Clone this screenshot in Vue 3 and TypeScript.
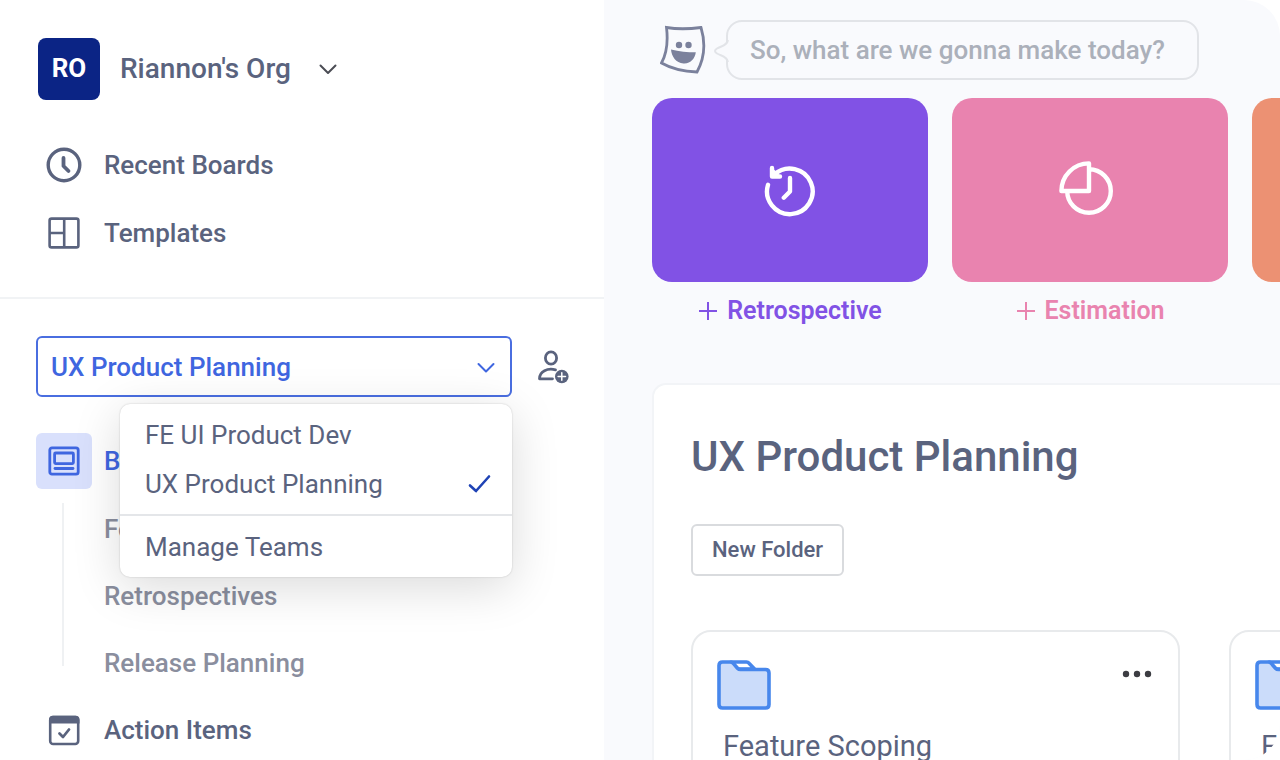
<script setup lang="ts">
import { ref } from 'vue'

const teams: string[] = ['FE UI Product Dev', 'UX Product Planning']
const team = ref('UX Product Planning')
const menuOpen = ref(true)
const boardFolders: string[] = ['Feature Scoping', 'Retrospectives', 'Release Planning']

function choose(name: string) {
  team.value = name
  menuOpen.value = false
}
</script>

<template>
  <div class="shell">
    <aside class="sidebar">
      <header class="account">
        <button class="org" type="button">
          <span class="badge">RO</span>
          <span class="org-name">Riannon's Org</span>
          <svg class="chevron" width="18" height="12" viewBox="0 0 18 12"><path d="M1.5 2.500 9 10 16.500 2.500" /></svg>
        </button>
        <nav class="nav">
          <a class="row" href="#">
            <span class="icon">
              <svg width="36" height="36" viewBox="0 0 36 36" fill="none" stroke="#5a637e" stroke-linecap="round" stroke-linejoin="round">
                <circle cx="18" cy="18" r="15.800" stroke-width="3.400" />
                <path d="M17.500 11v8l5 5" stroke-width="3.800" />
              </svg>
            </span>
            Recent Boards
          </a>
          <a class="row" href="#">
            <span class="icon">
              <svg width="32" height="32" viewBox="0 0 32 32" fill="none" stroke="#5a637e" stroke-width="2.600">
                <rect x="1.600" y="1.600" width="28.800" height="28.800" rx="2" />
                <path d="M16.200 1.600v28.800M1.600 16h14.600" />
              </svg>
            </span>
            Templates
          </a>
        </nav>
      </header>

      <section class="workspace">
        <div class="team-bar">
          <div class="team-picker">
            <select v-model="team" class="team-select" aria-label="Team" @mousedown.prevent="menuOpen = !menuOpen">
              <option v-for="name in teams" :key="name">{{ name }}</option>
            </select>
            <svg class="select-arrow" width="18" height="12" viewBox="0 0 18 12"><path d="M1.500 2 9 9.500 16.500 2" /></svg>
            <div v-if="menuOpen" class="menu" role="menu">
              <div class="menu-group">
                <button v-for="name in teams" :key="name" class="menu-item" type="button" role="menuitemradio" :aria-checked="name === team" @click="choose(name)">
                  {{ name }}
                  <svg v-if="name === team" width="24" height="20" viewBox="0 0 24 20" fill="none" stroke="#1f43b5" stroke-width="2.600" stroke-linecap="round" stroke-linejoin="round"><path d="M2 11.500 8 17 21 2.500" /></svg>
                </button>
              </div>
              <div class="menu-group last">
                <button class="menu-item" type="button" role="menuitem">Manage Teams</button>
              </div>
            </div>
          </div>
          <button class="invite" type="button" aria-label="Invite">
            <svg width="32" height="34" viewBox="0 0 32 34" fill="none" stroke="#5a637e" stroke-width="2.800" stroke-linecap="round" stroke-linejoin="round">
              <ellipse cx="13" cy="8" rx="5.600" ry="6.200" />
              <path d="M17.500 19.800c-8-2-16 1.400-16 9h13" />
              <circle cx="23.800" cy="26.500" r="6.800" fill="#5a637e" stroke="none" />
              <path d="M23.800 22.800v7.400M20.100 26.500h7.400" stroke="#fff" stroke-width="1.500" />
            </svg>
          </button>
        </div>

        <nav class="nav">
          <a class="row active" href="#">
            <span class="icon">
              <svg width="32" height="32" viewBox="0 0 32 32" fill="none" stroke="#3f66e0" stroke-width="2.800" stroke-linecap="round">
                <rect x="1.800" y="2.800" width="28.400" height="26.400" rx="2.200" />
                <rect x="6.600" y="8" width="18.800" height="10.600" rx="1" />
                <path d="M7 23.500h18" />
              </svg>
            </span>
            Boards
          </a>
          <div class="sub-list">
            <a v-for="name in boardFolders" :key="name" class="sub" href="#">{{ name }}</a>
          </div>
          <a class="row" href="#">
            <span class="icon">
              <svg width="32" height="32" viewBox="0 0 32 32" fill="none" stroke="#5a637e">
                <rect x="2.200" y="3" width="28" height="27" rx="3" stroke-width="2.600" />
                <path d="M1 9.500V5.500A3.800 3.800 0 0 1 4.800 1.700h22.900A3.800 3.800 0 0 1 31.500 5.500V9.500z" fill="#5a637e" stroke="none" />
                <path d="m11.500 19.500 3.500 3.500 6-7.500" stroke-width="2.800" stroke-linecap="round" stroke-linejoin="round" />
              </svg>
            </span>
            Action Items
          </a>
        </nav>
      </section>
    </aside>

    <main class="main">
      <div class="prompt">
        <svg class="mascot" width="46" height="50" viewBox="0 0 46 50" fill="none" stroke="#7b819c" stroke-width="2.800">
          <path d="M6.500 2.500c11 1.800 23 1.500 34.500 0 4.500 15 4 30-4 44.500-13-.5-25-3-35.500-9C7.500 27 8 15 6.500 2.500z" />
          <g fill="#7b819c" stroke="none">
            <circle cx="19" cy="20" r="3.200" />
            <circle cx="28.500" cy="20" r="3.200" />
            <path d="M11 24.500c8 2 16.500 2.800 24.800 2.800C35 33.500 30.500 39 23.500 38.500 16 38 11.500 31.500 11 24.500z" />
          </g>
        </svg>
        <div class="bubble">
          <svg class="tail" width="16" height="24" viewBox="0 0 16 24"><path d="M15 1C14 7 8 7 4 9.500Q0 12 4 14.500C8 17 14 17 15 23" fill="#f9fafd" stroke="#e2e4e8" stroke-width="2" /></svg>
          <p>So, what are we gonna make today?</p>
        </div>
      </div>

      <div class="makers">
        <button class="maker purple" type="button">
          <span class="tile">
            <svg width="54" height="54" viewBox="0 0 54 54" fill="none" stroke="#fff" stroke-width="4.400" stroke-linecap="round" stroke-linejoin="round">
              <path d="M5 21.800A22.800 22.800 0 1 0 11.500 11.500M9 5v8.500h8M27 15v13.500l-6.200 6.200" />
              <path d="M9 5v8.500h8L14 9z" fill="#fff" stroke="none" />
            </svg>
          </span>
          <span class="caption">
            <svg width="20" height="20" viewBox="0 0 20 20"><path d="M10 1v18M1 10h18" /></svg>
            Retrospective
          </span>
        </button>
        <button class="maker pink" type="button">
          <span class="tile">
            <svg width="64" height="64" viewBox="0 0 64 64" fill="none" stroke="#fff" stroke-width="4.400" stroke-linejoin="round">
              <path d="M31 11.200A21.800 21.800 0 1 1 9.200 33M31 5.400V33H3.400A27.600 27.600 0 0 1 31 5.400z" />
            </svg>
          </span>
          <span class="caption">
            <svg width="20" height="20" viewBox="0 0 20 20"><path d="M10 1v18M1 10h18" /></svg>
            Estimation
          </span>
        </button>
        <div class="maker orange"><span class="tile"></span></div>
      </div>

      <section class="panel">
        <h1>UX Product Planning</h1>
        <button class="new-folder" type="button">New Folder</button>
        <div class="folders">
          <article v-for="name in ['Feature Scoping', 'F']" :key="name" class="folder">
            <div class="folder-top">
              <svg width="54" height="50" viewBox="0 0 54 50" fill="#cbdcfa" stroke="#4787ec" stroke-width="3.600" stroke-linejoin="round">
                <path d="M14 2h15.500q1.500 0 2.500 1.200L37.500 9H21z" fill="#fff" />
                <path d="M5.500 2H13q2 0 3.300 1.400l4.200 4.800q1.200 1.300 3 1.300H48.500q3.500 0 3.500 3.500v31.500q0 3.500-3.500 3.500h-43Q2 48 2 44.500v-39Q2 2 5.500 2z" />
              </svg>
              <button class="more" type="button" aria-label="More">
                <svg width="30" height="8" viewBox="0 0 30 8" fill="#3c3d42"><circle cx="4" cy="4" r="3.200" /><circle cx="15" cy="4" r="3.200" /><circle cx="26" cy="4" r="3.200" /></svg>
              </button>
            </div>
            <h2>{{ name }}</h2>
          </article>
        </div>
      </section>
    </main>
  </div>
</template>

<style>
body {
  margin: 0;
  background: #fff;
}
</style>

<style scoped>
* {
  box-sizing: border-box;
}

.shell {
  display: flex;
  height: 100vh;
  overflow: hidden;
  font-family: Roboto, 'Liberation Sans', sans-serif;
  font-size: 26px;
  font-weight: 500;
  line-height: 32px;
  color: #5a637e;
  background: #fff;
}

button,
select {
  font: inherit;
  color: inherit;
  background: none;
  border: 0;
  padding: 0;
  cursor: pointer;
}

a {
  color: inherit;
  text-decoration: none;
}

svg {
  display: block;
  flex: none;
}

h1,
h2,
p {
  margin: 0;
}

.sidebar {
  flex: none;
  width: 604px;
}

.account {
  padding: 38px 36px 30px;
  border-bottom: 2px solid #f1f3f5;
}

.org {
  display: flex;
  align-items: center;
  margin: 0 0 31px 2px;
}

.badge {
  display: grid;
  place-items: center;
  width: 62px;
  height: 62px;
  padding-bottom: 2px;
  border-radius: 8px;
  background: #0b2485;
  color: #fff;
  font-weight: 700;
}

.org-name {
  margin: 0 28px 0 20px;
  font-size: 28px;
}

.chevron,
.select-arrow {
  fill: none;
  stroke: #4b4d55;
  stroke-width: 2;
  stroke-linecap: round;
  stroke-linejoin: round;
}

.row {
  display: flex;
  align-items: center;
  gap: 12px;
  height: 68px;
}

.icon {
  display: grid;
  place-items: center;
  width: 56px;
  height: 56px;
  border-radius: 6px;
}

.active {
  color: #3f66e0;
}

.active .icon {
  background: #d9e0fc;
}

.workspace {
  padding: 37px 32px 0 36px;
}

.team-bar {
  display: flex;
  align-items: center;
  gap: 26px;
  margin-bottom: 30px;
}

.team-picker {
  position: relative;
  flex: 1;
}

.team-select {
  display: block;
  appearance: none;
  width: 100%;
  height: 61px;
  padding: 0 48px 0 13px;
  border: 2px solid #4a6ee0;
  border-radius: 6px;
  background: #fff;
  color: #3f66e0;
}

.select-arrow {
  position: absolute;
  top: 26px;
  right: 17px;
  stroke: #3f66e0;
  pointer-events: none;
}

.menu {
  position: absolute;
  z-index: 2;
  top: 68px;
  left: 84px;
  right: 0;
  border-radius: 10px;
  background: #fff;
  box-shadow: 0 0 2px rgba(0, 0, 0, 0.2), 0 10px 48px rgba(0, 0, 0, 0.15);
}

.menu-group {
  padding: 6px 0;
}

.menu-group.last {
  border-top: 2px solid #e4e6e9;
}

.menu-item {
  display: flex;
  align-items: center;
  justify-content: space-between;
  width: 100%;
  height: 49px;
  padding: 0 20px 0 25px;
  font-weight: 400;
}

.invite {
  margin-right: 2px;
}

.sub-list {
  margin-left: 26px;
  padding-left: 42px;
  background: linear-gradient(#eff1f3, #eff1f3) 0 8px / 2px calc(100% - 38px) no-repeat;
}

.sub {
  display: flex;
  align-items: center;
  height: 67px;
  color: #8a8e9e;
}

.main {
  flex: 1;
  min-width: 0;
  overflow: hidden;
  padding: 20px 0 0 48px;
  border-radius: 0 36px 36px 0;
  background: #f9fafd;
}

.prompt {
  display: flex;
  align-items: center;
  gap: 20px;
  margin: 0 81px 18px 8px;
}

.bubble {
  position: relative;
  flex: 1;
  padding: 12px 22px;
  border: 2px solid #e2e4e8;
  border-radius: 16px;
  color: #abb0ba;
}

.tail {
  position: absolute;
  top: 17px;
  left: -15px;
}

.makers {
  display: flex;
  gap: 24px;
}

.maker {
  flex: none;
  width: 276px;
}

.tile {
  display: grid;
  place-items: center;
  height: 184px;
  border-radius: 20px;
  background: currentColor;
}

.caption {
  display: flex;
  align-items: center;
  justify-content: center;
  gap: 9px;
  margin-top: 13px;
  font-size: 25px;
  font-weight: 600;
}

.caption svg {
  fill: none;
  stroke: currentColor;
  stroke-width: 2;
}

.purple {
  color: #8152e5;
}

.pink {
  color: #e983af;
}

.orange {
  color: #ec9173;
}

.panel {
  margin-top: 56px;
  padding: 48px 0 40px 37px;
  border: 2px solid #f2f4f7;
  border-right: 0;
  border-radius: 14px 0 0 0;
  background: #fff;
}

h1 {
  font-size: 42px;
  line-height: 48px;
  font-weight: 500;
}

.new-folder {
  height: 52px;
  margin: 43px 0 54px;
  padding: 0 19px;
  border: 2px solid #d9dbde;
  border-radius: 6px;
  font-size: 22px;
}

.folders {
  display: flex;
  gap: 49px;
}

.folder {
  flex: none;
  width: 489px;
  padding: 28px 26px 40px 24px;
  border: 2px solid #e8eaec;
  border-radius: 20px;
}

.folder-top {
  display: flex;
  align-items: flex-start;
  justify-content: space-between;
}

.more {
  padding: 10px 0;
}

h2 {
  margin: 20px 0 0 6px;
  font-size: 29px;
  font-weight: 400;
  line-height: 32px;
}
</style>
